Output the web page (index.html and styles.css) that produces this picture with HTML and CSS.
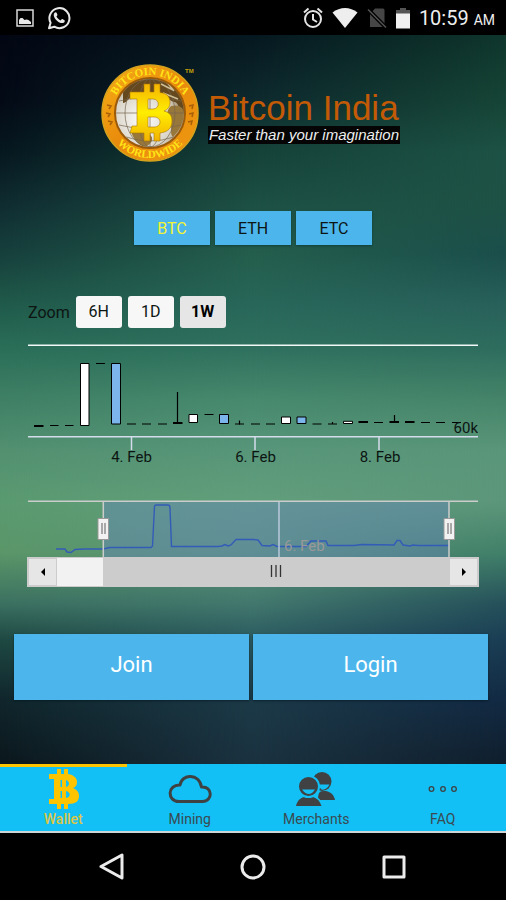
FILE: index.html
```
<!DOCTYPE html>
<html lang="en">
<head>
<meta charset="utf-8">
<meta name="viewport" content="width=device-width, initial-scale=1">
<title>Bitcoin India</title>
<link rel="stylesheet" href="styles.css">
</head>
<body>
<header class="status">
  <div class="status-left">
    <svg width="18" height="18" viewBox="0 0 18 18"><rect x="1" y="1" width="16" height="16" fill="none" stroke="#d8d8d8" stroke-width="1.5"/><path d="M3 15v-4l1.500-2h2l2 2 2-.5 2 .5 2.500 2v2z" fill="#e8e8e8"/></svg>
    <svg width="24" height="24" viewBox="0 0 24 24"><path d="M2 22.300l1.600-5.500A10 10 0 1 1 7.300 20.700z" fill="none" stroke="#e8e8e8" stroke-width="2" stroke-linejoin="round"/><path d="M7.200 7.200c1-1.500 2-1.300 2.500-.200l.7 1.700c.2.700-.8 1.400-1 1.900 1 1.900 2.400 3.100 4.200 3.800.6-.2 1.100-1.500 1.800-1.300l2.100 1.100c.6.500.2 1.900-.8 2.500-2 1.100-4.700-.1-6.700-1.900-2-1.900-4.200-5.300-2.800-7.600z" fill="#e8e8e8"/></svg>
  </div>
  <div class="status-right">
    <svg width="20" height="22" viewBox="0 0 20 22"><g fill="none" stroke="#e4e4e4" stroke-width="2"><circle cx="10" cy="12" r="8"/><path d="M10 7v5.500l4 2.500M1 5.500l4.500-4M19 5.500l-4.500-4"/></g></svg>
    <svg width="26" height="22" viewBox="0 0 26 22"><path d="M.5 5.500C8-.5 18-.5 25.500 5.500L13 21z" fill="#eee"/></svg>
    <svg width="20" height="22" viewBox="0 0 20 22"><path d="M8 1.500h8q1.500 0 1.500 1.500v17H3V7z" fill="#464646"/><path d="M1 2.500l18 18" stroke="#000" stroke-width="4"/><path d="M1 2.500l18 18" stroke="#555" stroke-width="1.500"/></svg>
    <svg width="14" height="22" viewBox="0 0 14 22"><path d="M0 3h4V1h6v2h4v4H0z" fill="#555"/><path d="M0 6.500h14V21.500H0z" fill="#f1f1f1"/></svg>
    <time class="clock">10:59 <small>AM</small></time>
  </div>
</header>

<main class="screen">
  <div class="brand">
    <svg class="coin" width="98" height="98" viewBox="0 0 98 98" role="img" aria-label="Bitcoin India Worldwide">
      <defs>
        <linearGradient id="rim" x1="0" y1="0" x2="1" y2="1"><stop offset="0" stop-color="#f5ae16"/><stop offset=".5" stop-color="#e98a0c"/><stop offset="1" stop-color="#ee9a12"/></linearGradient>
        <linearGradient id="gold" x1="0" y1="0" x2="0" y2="1"><stop offset="0" stop-color="#f5b400"/><stop offset=".5" stop-color="#ffed00"/><stop offset="1" stop-color="#f2b200"/></linearGradient>
        <radialGradient id="globe" cx=".4" cy=".6" r=".7"><stop offset="0" stop-color="#fff"/><stop offset=".6" stop-color="#d9d4c8"/><stop offset="1" stop-color="#7a6030"/></radialGradient>
        <clipPath id="disc"><circle cx="49" cy="49" r="34"/></clipPath>
        <path id="arc-top" d="M11 49a38 38 0 0 1 76 0"/>
        <path id="arc-bottom" d="M4 49a45 45 0 0 0 90 0"/>
      </defs>
      <circle cx="49" cy="49" r="48" fill="url(#rim)" stroke="#d6a31c" stroke-width="1.500"/>
      <circle cx="49" cy="49" r="35" fill="url(#globe)" stroke="#9a5a0a" stroke-width="2"/>
      <g clip-path="url(#disc)">
        <path d="M22 27C32 14 54 11 68 21c10 7 15 15 15 27-6-2-5-9-9-10-5 0-7-6-11-4-6 2-8-8-17-5-8 1-10 6-17 5-3 2-4 5-7 5z" fill="#65481e"/>
        <path d="M70 42c8-2 13 2 13 7-1 10-4 17-11 24-4-4 0-10-3-15-4-3-4-12 1-16zM30 66c5-3 12 2 18 4 6 4 3 10-4 13-7-2-13-9-14-17z" fill="#98773b"/>
        <g fill="none" stroke="#75654d" stroke-width=".7"><ellipse cx="49" cy="49" rx="12" ry="34"/><ellipse cx="49" cy="49" rx="25" ry="34"/><path d="M15 49h68M18 37q31-8 62 0M18 61q31 8 62 0M25 73q24 8 48 0M49 15v68"/></g>
        <path d="M60 20l12 6M65 17l8 10M62 29l15 6" stroke="#cdbd95" stroke-width="1.500"/>
      </g>
      <path fill="url(#gold)" stroke="#ad7600" stroke-width=".6" fill-rule="evenodd" d="M29 28h14v-8h6v8h4v-8h6v8.500c8 1 10 5 10 10 0 4-2 7-6 8.500 6 1.500 8 5 8 10 0 7-4 11-12 12v8h-6v-8h-4v8h-6v-8H29l2-7h5V35h-7zm18 7v10h5c7 0 7-10 0-10zm0 18v10h6c8 0 8-10 0-10z"/>
      <g class="coin-text" font-size="11">
        <text text-anchor="middle"><textPath href="#arc-top" startOffset="50%">BITCOIN INDIA</textPath></text>
        <text text-anchor="middle"><textPath href="#arc-bottom" startOffset="50%">WORLDWIDE</textPath></text>
      </g>
      <g stroke="#a76008" stroke-width="1.500" fill="none"><path d="M6 41l4 1-2 3M5 49l4 1-2 3M7 57l4 1-2 3M88 42l4-1-1 4M88 50l4-1-1 4M87 58l4-1-1 4"/></g>
      <text class="tm" x="84" y="9">TM</text>
    </svg>
    <div class="brand-words">
      <h1>Bitcoin India</h1>
      <p>Faster than your imagination</p>
    </div>
  </div>

  <div class="coins">
    <button class="coin-tab active" type="button">BTC</button>
    <button class="coin-tab" type="button">ETH</button>
    <button class="coin-tab" type="button">ETC</button>
  </div>

  <section class="chart">
    <div class="zoom">
      <span>Zoom</span>
      <button type="button">6H</button>
      <button type="button">1D</button>
      <button type="button" class="selected">1W</button>
    </div>
    <svg class="plot" viewBox="28 344 450 130" role="img" aria-label="Price candles">
      <path d="M28 345.200h450" stroke="#f2f8f5" stroke-width="1.600"/>
      <path d="M28 436.700h450M131.500 437v13M255 437v13M379 437v13" stroke="#d5dcec" stroke-width="1.500" fill="none"/>
      <g stroke="#000" fill="none">
        <path stroke-width="1.200" d="M50 425.500h8.500M65 425.500h8.500M96 363.500h9M127 424h9M142 424h9M158 424h9M204.500 414.500h9M235 424h9M251 424h9M266 424h9M312.500 424h9M328 424h9M374 422.500h9M421 422.500h9M436 422.500h9M452 422.500h9"/>
        <path stroke-width="2.200" d="M34 426h9.500M173 423h9.500M358.500 422h9.500M389.500 422h9.500M405 422h9.500"/>
        <path stroke-width="1.200" d="M177.500 392v30M239.500 420.500v4M332.500 422v2M394.500 415v7"/>
        <g fill="#fff"><path d="M80.500 363.500h8.500v62h-8.500zM189 414.500h8.500v8h-8.500zM281.500 417h9v6.500h-9zM343.500 421.300h9v2.200h-9z"/></g>
        <g fill="#7cb5ec"><path d="M111.500 363.500h9V424h-9zM219.500 414.500h9v9h-9zM297 417h9v6.500h-9z"/></g>
      </g>
      <g class="axis">
        <text x="478" y="433" text-anchor="end">60k</text>
        <text x="131.500" y="462" text-anchor="middle">4. Feb</text>
        <text x="255.500" y="462" text-anchor="middle">6. Feb</text>
        <text x="380" y="462" text-anchor="middle">8. Feb</text>
      </g>
    </svg>
    <svg class="navigator" viewBox="28 500 450 57" role="img" aria-label="Range navigator">
      <path d="M103 502h346v55H103z" fill="#6685c2" fill-opacity=".4"/>
      <path d="M56 549h9l2 3 4 .5 4-3 9-.5h19l7-1.500h41l1.500-1.500 2-39.500q.2-1.500 1.500-1.500h12q2 0 2 3l1.500 38.500H218l4-.5 3-1.500 3 1.500 3-1 5-5.500h17l5 .5 4 5.500 8 .5 3-1.500 4 2h29l5-5.500h15l2 4.500h26l8-1 32 .5 3-4.500h3l3 4.500 7 1 3-1 5 .5h31" fill="none" stroke="#335cb8" stroke-width="1.400"/>
      <text class="nav-label" x="284" y="551">6. Feb</text>
      <path d="M279 502v55" stroke="#bac8dc" stroke-width="1.500"/>
      <path d="M28 501.300h450M103.300 501v56M449 501v56" stroke="#ccc" stroke-width="1.500"/>
      <g fill="#f2f2f2" stroke="#999"><path d="M98 518.500h10.500v21H98zM444 518.500h10.500v21H444z"/></g>
      <path d="M102 523v11M105 523v11M448 523v11M451 523v11" stroke="#777" stroke-width="1.200"/>
    </svg>
    <div class="scroll">
      <button type="button" aria-label="Scroll left"><svg width="6" height="8" viewBox="0 0 6 8"><path d="M5 0v8L1 4z"/></svg></button>
      <div class="thumb"><svg width="12" height="12" viewBox="0 0 12 12"><path d="M1.500 0v12M6 0v12M10.500 0v12" stroke="#333" stroke-width="1.300"/></svg></div>
      <button type="button" aria-label="Scroll right"><svg width="6" height="8" viewBox="0 0 6 8"><path d="M1 0v8l4-4z"/></svg></button>
    </div>
  </section>

  <div class="actions">
    <button type="button">Join</button>
    <button type="button">Login</button>
  </div>
</main>

<nav class="tabs">
  <a href="#wallet" class="active">
    <svg width="44" height="40" viewBox="0 0 44 40"><path fill="#ffc400" fill-rule="evenodd" d="M8 5h8V0h4v5h3V0h4v5c6 1 9 4 9 8 0 3-1 5-4 6 4 2 6 4 6 8 0 5-3 8-11 8v5h-4v-5h-3v5h-4v-5H8v-5h5V10H8zm11.500 6v7h1.500v-7zm0 11v7h1.500v-7zM25 11v7c4-1 4-6 0-7zm0 11v7c5-1 5-6 0-7z"/></svg>
    <span>Wallet</span>
  </a>
  <a href="#mining">
    <svg width="44" height="40" viewBox="0 0 44 40"><path d="M11 32.500C-1 32.500-1 15.500 12 16 14 4.500 31 4 33.500 18 45 17 45 32.500 34.500 32.500z" fill="none" stroke="#3f4142" stroke-width="3" stroke-linejoin="round"/></svg>
    <span>Mining</span>
  </a>
  <a href="#merchants">
    <svg width="44" height="40" viewBox="0 0 44 40"><g fill="#3f4142"><circle cx="28" cy="12.500" r="9.500"/><path d="M24 31c0-6 1-9 5-9h3c5 1 8 4 9 9z"/></g><path d="M23 15.500h12.500q-3 6-8 5z" fill="#12c0f5"/><path d="M2 37c1-5 4-8 8-9h9c4 1 7 4 8.500 9z" fill="#3f4142" stroke="#12c0f5" stroke-width="3" paint-order="stroke"/><circle cx="14.500" cy="17.500" r="10.500" fill="#3f4142" stroke="#12c0f5" stroke-width="2"/><path d="M8 20.500h13q-6 9-13 0z" fill="#12c0f5"/></svg>
    <span>Merchants</span>
  </a>
  <a href="#faq">
    <svg width="44" height="40" viewBox="0 0 44 40"><g fill="none" stroke="#3f4142" stroke-width="1.300"><circle cx="10.500" cy="20" r="2.300"/><circle cx="22" cy="20" r="2.300"/><circle cx="33" cy="20" r="2.300"/></g></svg>
    <span>FAQ</span>
  </a>
</nav>

<footer class="system">
  <button type="button" aria-label="Back"><svg width="28" height="28" viewBox="0 0 28 28"><path d="M24 2v23L3 13.500z"/></svg></button>
  <button type="button" aria-label="Home"><svg width="28" height="28" viewBox="0 0 28 28"><circle cx="14" cy="14" r="11"/></svg></button>
  <button type="button" aria-label="Recent apps"><svg width="28" height="28" viewBox="0 0 28 28"><rect x="4" y="4" width="20" height="20"/></svg></button>
</footer>
</body>
</html>
```
FILE: styles.css
```
* { box-sizing: border-box; }

body {
  margin: 0;
  min-height: 100vh;
  display: flex;
  flex-direction: column;
  background: #000;
  color: #0c1512;
  font-family: Roboto, "Liberation Sans", sans-serif;
  font-size: 16px;
}

button {
  font: inherit;
  color: inherit;
  border: 0;
  padding: 0;
  cursor: pointer;
}

svg { display: block; flex: none; }

.status {
  height: 35px;
  padding: 0 11px 0 16px;
  display: flex;
  align-items: center;
  justify-content: space-between;
  color: #eee;
}

.status-left { display: flex; align-items: center; gap: 13px; }
.status-right { display: flex; align-items: center; gap: 9px; }
.clock { font-size: 20px; }
.clock small { font-size: 14px; }

/* Backdrop: three vertical colour runs blended from left to right */
.screen {
  position: relative;
  isolation: isolate;
  flex: 1;
  padding: 29px 0 16px;
  background: linear-gradient(#061820 0%, #0e2a2e 9%, #154239 16%, #1d5044 23%, #245e4c 30%, #28675a 37%, #2f715e 43%, #478a6e 50%, #58967a 57%, #629f7c 64%, #5b9477 71%, #42786e 78%, #2b5a60 83%, #1c3a48 91%, #1b3240 100%);
}

.screen::before,
.screen::after {
  content: "";
  position: absolute;
  inset: 0;
  z-index: -1;
}

.screen::before {
  background: linear-gradient(#020612 0%, #030a16 9%, #06171f 16%, #0f2b30 23%, #163f3c 30%, #205a4a 37%, #2a6e58 43%, #3f8065 50%, #529070 57%, #5a9a70 64%, #5a9668 71%, #3b7060 78%, #1e4842 83%, #10262c 91%, #0b171c 100%);
  mask-image: linear-gradient(to right, #000, transparent 50%);
}

.screen::after {
  background: linear-gradient(#0f362c 0%, #164536 9%, #1d5245 16%, #1e5245 23%, #1a4e4b 30%, #28605a 37%, #2e6d5e 43%, #458469 50%, #5a9679 57%, #5c967a 64%, #418069 71%, #25505a 78%, #1a3d54 83%, #122a44 91%, #101e2c 100%);
  mask-image: linear-gradient(to left, #000, transparent 50%);
}

.brand {
  display: flex;
  justify-content: center;
  gap: 9px;
  margin-right: 5px;
}

.coin-text { fill: #ffe417; font-family: "Liberation Serif", serif; font-weight: bold; }
.tm { fill: #c5a20b; font-family: "Liberation Sans", sans-serif; font-size: 6px; font-weight: bold; }

.brand-words {
  padding-top: 25px;
  font-family: "Liberation Sans", sans-serif;
}

.brand h1 {
  margin: 0;
  color: #c35a06;
  font-size: 35px;
  line-height: 37px;
  font-weight: 400;
}

.brand p {
  margin: 0;
  padding: 0 1px;
  background: #050505;
  color: #eee;
  font-size: 15px;
  line-height: 18px;
  font-style: italic;
}

.coins {
  margin-top: 49px;
  display: flex;
  justify-content: center;
  gap: 5px;
}

.coin-tab {
  width: 76px;
  height: 34px;
  background: #4cb6ec;
  box-shadow: 0 1px 2px rgba(0, 40, 40, .5);
}

.coin-tab.active { color: #f4f436; }

.chart { margin: 51px 28px 0; }

.zoom {
  display: flex;
  align-items: center;
  gap: 6px;
}

.zoom button {
  width: 46px;
  height: 32px;
  padding-bottom: 2px;
  border-radius: 3px;
  background: #f7f7f7;
}

.zoom .selected { background: #e6e6e6; color: #000; font-weight: 700; }

.plot { width: 100%; margin-top: 16px; }
.axis { fill: #0c1512; font-size: 15px; }
.navigator { width: 100%; margin-top: 26px; }
.nav-label { fill: #999; font-size: 15px; }

.scroll {
  display: flex;
  height: 30px;
  margin: 0 -1px;
  background: #f2f2f2;
  border: 1px solid #ccc;
}

.scroll button {
  width: 29px;
  display: grid;
  place-items: center;
  background: #e6e6e6;
  border: 1px solid #ccc;
}

.thumb {
  flex: 1;
  margin-left: 46px;
  padding-bottom: 2px;
  display: grid;
  place-items: center;
  background: #ccc;
}

.actions {
  margin: 47px 18px 0 14px;
  display: flex;
  gap: 4px;
}

.actions button {
  flex: 1;
  height: 66px;
  padding-bottom: 6px;
  background: #4cb6ec;
  box-shadow: 0 1px 2px rgba(0, 20, 30, .6);
  color: #fff;
  font-size: 22px;
}

.tabs {
  display: flex;
  background: #12c0f5;
  border-bottom: 2px solid #cdd5d8;
}

.tabs a {
  flex: 1;
  height: 67px;
  padding-top: 2px;
  border-top: 3px solid transparent;
  display: flex;
  flex-direction: column;
  align-items: center;
  color: #3a4a50;
  font-size: 14px;
  line-height: 20px;
  text-decoration: none;
}

.tabs .active { border-top-color: #ffc400; color: #dcc648; font-weight: 500; }

.system {
  height: 67px;
  padding: 0 42px;
  display: flex;
}

.system button {
  flex: 1;
  display: grid;
  place-items: center;
  background: none;
}

.system svg { fill: none; stroke: #ececec; stroke-width: 3; stroke-linejoin: round; }
```
